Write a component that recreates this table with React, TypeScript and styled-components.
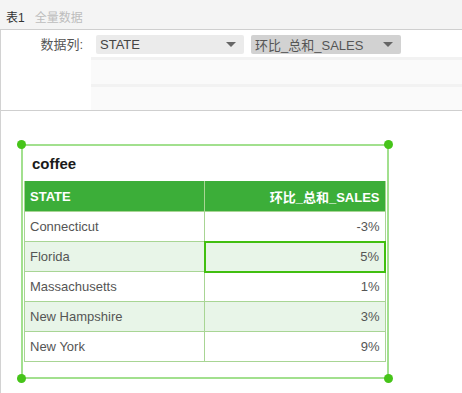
import styled, { createGlobalStyle } from "styled-components";

const GlobalStyle = createGlobalStyle`
  html, body {
    margin: 0;
    padding: 0;
    background: #fff;
  }
  body {
    font-family: "Liberation Sans", Arial, "Noto Sans CJK SC", sans-serif;
  }
`;

const Page = styled.div`
  width: 462px;
  height: 393px;
  overflow: hidden;
  background: #fff;
`;

const TopBar = styled.div`
  height: 30px;
  box-sizing: border-box;
  padding: 11px 0 0 6px;
  background: #f4f4f4;
  border-bottom: 1px solid #cfcfcf;
  display: flex;
  gap: 10px;
  font-size: 12px;
  line-height: 14px;
`;

const Tab = styled.span<{ $muted?: boolean }>`
  color: ${(p) => (p.$muted ? "#bdbdbd" : "#333")};
`;

const Body = styled.div`
  border-left: 1px solid #d2d2d2;
  height: 363px;
`;

const FieldPanel = styled.div`
  height: 80px;
  border-bottom: 1px solid #cfcfcf;
  display: flex;
  flex-direction: column;
`;

const FieldRow = styled.div`
  height: 27px;
  display: grid;
  grid-template-columns: 90px 1fr;
  align-items: center;
`;

const FieldLabel = styled.span`
  text-align: right;
  padding-right: 8px;
  font-size: 13px;
  color: #555;
`;

const Selects = styled.div`
  display: flex;
  gap: 7px;
  padding-left: 5px;
  padding-top: 1px;
`;

const Select = styled.div<{ $active?: boolean }>`
  width: ${(p) => (p.$active ? "150px" : "148px")};
  height: 19px;
  box-sizing: border-box;
  border-radius: 2px;
  background: ${(p) => (p.$active ? "#d2d2d2" : "#ebebeb")};
  display: flex;
  align-items: center;
  justify-content: space-between;
  padding: 0 8px 0 4px;
  font-size: 13px;
  color: ${(p) => (p.$active ? "#555" : "#444")};
`;

const Caret = styled.span`
  width: 0;
  height: 0;
  border-left: 5px solid transparent;
  border-right: 5px solid transparent;
  border-top: 5px solid #666;
`;

const EmptyRow = styled.div<{ $h: number }>`
  margin-left: 90px;
  height: ${(p) => p.$h}px;
  border-top: 3px solid #f2f2f2;
  background: #fafafa;
`;

const Canvas = styled.div`
  padding: 33px 0 0 20px;
`;

const Widget = styled.div`
  position: relative;
  width: 362px;
  border: 2px solid #a2e08e;
  padding: 0 1px 15px 1px;
`;

const Handle = styled.span<{ $top?: boolean; $left?: boolean }>`
  position: absolute;
  width: 9px;
  height: 9px;
  border-radius: 50%;
  background: #46c419;
  ${(p) => (p.$top ? "top: -6px;" : "bottom: -6px;")}
  ${(p) => (p.$left ? "left: -6px;" : "right: -6px;")}
`;

const WidgetTitle = styled.div`
  height: 35px;
  line-height: 35px;
  padding-left: 8px;
  font-size: 15px;
  font-weight: bold;
  color: #1a1a1a;
`;

const Table = styled.table`
  width: 100%;
  border-collapse: collapse;
  table-layout: fixed;
  font-size: 13px;
`;

const HeadCell = styled.th<{ $right?: boolean }>`
  height: 30px;
  padding: 0 5px;
  background: #3cae39;
  color: #fff;
  font-weight: bold;
  text-align: ${(p) => (p.$right ? "right" : "left")};
  border: 1px solid #a8d594;
  border-top: none;
`;

const Row = styled.tr<{ $alt?: boolean }>`
  background: ${(p) => (p.$alt ? "#e8f5e8" : "#fff")};
`;

const Cell = styled.td<{ $right?: boolean; $selected?: boolean }>`
  height: 30px;
  box-sizing: border-box;
  padding: 0 5px;
  color: #555;
  text-align: ${(p) => (p.$right ? "right" : "left")};
  border: ${(p) => (p.$selected ? "2px solid #41bf10" : "1px solid #a8d594")};
`;

const rows = [
  { state: "Connecticut", value: "-3%" },
  { state: "Florida", value: "5%" },
  { state: "Massachusetts", value: "1%" },
  { state: "New Hampshire", value: "3%" },
  { state: "New York", value: "9%" },
];

const App = () => {
  return (
    <Page>
      <GlobalStyle />
      <TopBar>
        <Tab>表1</Tab>
        <Tab $muted>全量数据</Tab>
      </TopBar>
      <Body>
        <FieldPanel>
          <FieldRow>
            <FieldLabel>数据列:</FieldLabel>
            <Selects>
              <Select>
                STATE
                <Caret />
              </Select>
              <Select $active>
                环比_总和_SALES
                <Caret />
              </Select>
            </Selects>
          </FieldRow>
          <EmptyRow $h={24} />
          <EmptyRow $h={23} />
        </FieldPanel>
        <Canvas>
          <Widget>
            <Handle $top $left />
            <Handle $top />
            <Handle $left />
            <Handle />
            <WidgetTitle>coffee</WidgetTitle>
            <Table>
              <thead>
                <tr>
                  <HeadCell>STATE</HeadCell>
                  <HeadCell $right>环比_总和_SALES</HeadCell>
                </tr>
              </thead>
              <tbody>
                {rows.map((r, i) => (
                  <Row key={r.state} $alt={i % 2 === 1}>
                    <Cell>{r.state}</Cell>
                    <Cell $right $selected={r.state === "Florida"}>
                      {r.value}
                    </Cell>
                  </Row>
                ))}
              </tbody>
            </Table>
          </Widget>
        </Canvas>
      </Body>
    </Page>
  );
};

export default App;
